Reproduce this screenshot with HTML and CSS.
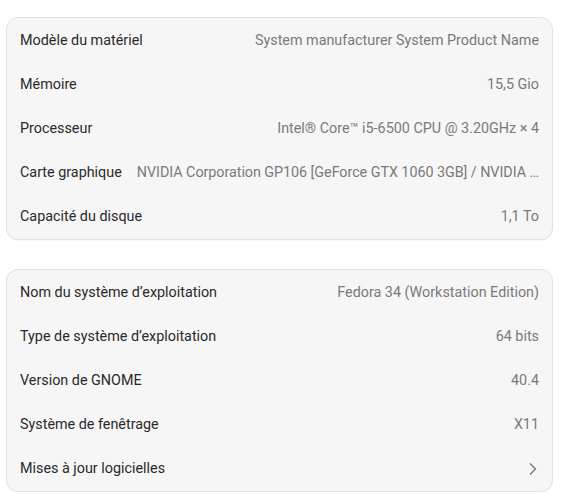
FILE: index.html
```html
<!DOCTYPE html>
<html lang="fr">
<head>
<meta charset="utf-8">
<link rel="stylesheet" href="styles.css">
</head>
<body>
<div class="page">
  <div class="card">
    <div class="row"><span class="label">Modèle du matériel</span><span class="value">System manufacturer System Product Name</span></div>
    <div class="row"><span class="label">Mémoire</span><span class="value">15,5 Gio</span></div>
    <div class="row"><span class="label">Processeur</span><span class="value">Intel® Core™ i5-6500 CPU @ 3.20GHz × 4</span></div>
    <div class="row"><span class="label">Carte graphique</span><span class="value tight">NVIDIA Corporation GP106 [GeForce GTX 1060 3GB] / NVIDIA …</span></div>
    <div class="row"><span class="label">Capacité du disque</span><span class="value">1,1 To</span></div>
  </div>
  <div class="card">
    <div class="row"><span class="label">Nom du système d’exploitation</span><span class="value">Fedora 34 (Workstation Edition)</span></div>
    <div class="row"><span class="label">Type de système d’exploitation</span><span class="value">64 bits</span></div>
    <div class="row"><span class="label">Version de GNOME</span><span class="value">40.4</span></div>
    <div class="row"><span class="label">Système de fenêtrage</span><span class="value">X11</span></div>
    <div class="row"><span class="label">Mises à jour logicielles</span><span class="value chevron"><svg width="8" height="12" viewBox="0 0 8 12"><path d="M1 0.5 L6.5 6 L1 11.5" fill="none" stroke="#6e6e6e" stroke-width="1.2"/></svg></span></div>
  </div>
</div>
</body>
</html>
```
FILE: styles.css
```css
html, body {
  margin: 0;
  padding: 0;
  background: #ffffff;
}
body {
  font-family: Roboto, "Liberation Sans", sans-serif;
  font-size: 14.35px;
  color: #2e2e2e;
}
.page {
  width: 547px;
  padding: 17px 0 0 6px;
  display: flex;
  flex-direction: column;
  gap: 29px;
}
.card {
  background: #f6f6f6;
  border: 1px solid #e2e2e2;
  border-radius: 12px;
  box-shadow: 0 1px 1px rgba(0,0,0,0.03);
  display: flex;
  flex-direction: column;
}
.row {
  height: 44.2px;
  display: flex;
  align-items: center;
  padding: 0 13px 0 13px;
  gap: 10px;
}
.label {
  white-space: nowrap;
  flex: none;
  color: #2a2a2a;
}
.value {
  flex: 1;
  min-width: 0;
  text-align: right;
  white-space: nowrap;
  color: #7a7a7a;
}
.value.tight {
  letter-spacing: -0.05px;
}
.chevron {
  display: flex;
  justify-content: flex-end;
  padding-right: 2px;
}
```
